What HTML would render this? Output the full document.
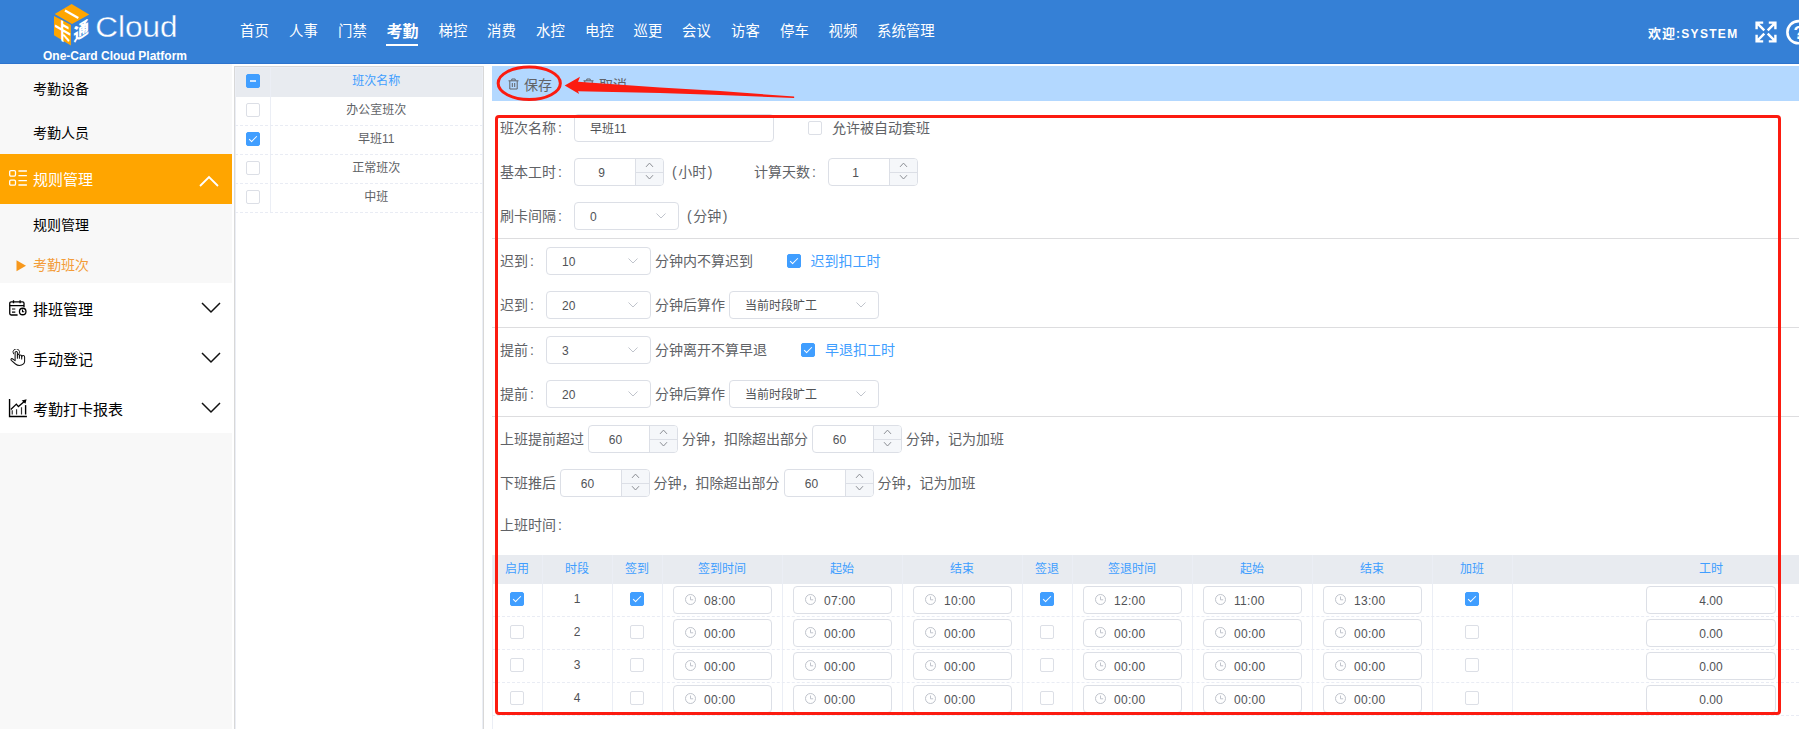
<!DOCTYPE html><html lang="zh-CN"><head><meta charset="utf-8"><title>考勤班次</title><style>
*{box-sizing:border-box;margin:0;padding:0}
html,body{width:1799px;height:729px;overflow:hidden;background:#fff}
body{position:relative;font-family:"Liberation Sans","Noto Sans CJK SC",sans-serif;font-size:14px;color:#606266}
.a{position:absolute;white-space:nowrap}
.t{position:absolute;white-space:nowrap;height:20px;line-height:20px}
.hdr{left:0;top:0;width:1799px;height:64px;background:#3580d6}
.nav{color:#fff;font-size:14.4px;top:21px}
.side{left:0;top:64px;width:232px;height:665px;background:#f8f8f8}
.sm{color:#000;font-size:14px;left:33px}
.sm2{color:#000;font-size:15px;left:33px}
.inp{position:absolute;height:28px;border:1px solid #dcdfe6;border-radius:4px;background:#fff}
.it{position:absolute;white-space:nowrap;font-size:12px;height:26px;line-height:26px;top:1px;color:#505256}
.tm{letter-spacing:0.300px}
.lb{position:absolute;white-space:nowrap;font-size:14px;height:28px;line-height:28px;color:#606266}
.cb{position:absolute;width:14px;height:14px;border:1px solid #dcdfe6;border-radius:2px;background:#fff}
.cb.on{background:#409eff;border-color:#409eff}
.cb.on:after{content:"";position:absolute;left:4px;top:1px;width:3px;height:7px;border:1px solid #fff;border-left:0;border-top:0;transform:rotate(45deg)}
.sep{position:absolute;left:492px;width:1307px;height:1px;background:#dddddf}
.spin{position:absolute;right:0;top:0;width:28px;height:26px;background:#f5f7fa;border-left:1px solid #dcdfe6;border-radius:0 3px 3px 0}
.spin:before{content:"";position:absolute;left:0;top:12.5px;width:27px;height:1px;background:#dcdfe6}
.th{position:absolute;top:555px;height:29px;line-height:29px;font-size:12px;color:#409eff;text-align:center;white-space:nowrap}
.td{position:absolute;height:33px;line-height:32px;font-size:12px;color:#505256;text-align:center}
.vl{position:absolute;width:1px;background:#ebeef5}
.c{margin-left:2px}
.hl{position:absolute;height:0;border-top:1px dashed #e9ecf4}
</style></head><body>
<div class="a hdr"></div><div class="a" style="left:0;top:63px;width:1799px;height:1px;background:#2d74ce"></div>
<svg class="a" style="left:50px;top:0" width="140" height="64" viewBox="50 0 140 64">
<polygon points="71.600,4 89.200,14.400 72,24.100 54.700,14.100" fill="#ffa500"/>
<polygon points="54,16.100 70.900,24.800 70.900,45.400 54,35.300" fill="#ffa500"/>
<line x1="65" y1="10.600" x2="78.300" y2="18" stroke="#fff" stroke-width="2.300"/>
<g transform="matrix(1,0.585,0,1.350,54.500,0)"><text x="0" y="25.900" font-family="'Noto Sans CJK SC',sans-serif" font-weight="700" font-size="16.500" fill="#fff">卡</text></g>
<g transform="matrix(0.940,-0.585,0,1.080,73.400,0)"><text x="0" y="39" font-family="'Noto Sans CJK SC',sans-serif" font-weight="900" font-size="16.500" fill="#fff">通</text></g>
<text x="95.300" y="36.900" font-family="'Liberation Sans',sans-serif" font-size="29.500" fill="#fff" stroke="#3580d6" stroke-width="0.350" textLength="82.300" lengthAdjust="spacingAndGlyphs">Cloud</text>
</svg>
<div class="a" style="left:43px;top:49px;width:144px;height:14px;line-height:14px;font-size:12px;font-weight:700;color:#fff;text-align:center">One-Card Cloud Platform</div>
<div class="t nav" style="left:240px">首页</div>
<div class="t nav" style="left:289px">人事</div>
<div class="t nav" style="left:338px">门禁</div>
<div class="t" style="left:386.500px;top:21px;color:#fff;font-size:16px;font-weight:700;height:22px;line-height:22px">考勤</div>
<div class="a" style="left:386px;top:44px;width:32px;height:2px;background:#fff"></div>
<div class="t nav" style="left:438.5px">梯控</div>
<div class="t nav" style="left:487px">消费</div>
<div class="t nav" style="left:536px">水控</div>
<div class="t nav" style="left:585px">电控</div>
<div class="t nav" style="left:633.5px">巡更</div>
<div class="t nav" style="left:682px">会议</div>
<div class="t nav" style="left:731px">访客</div>
<div class="t nav" style="left:780px">停车</div>
<div class="t nav" style="left:828.5px">视频</div>
<div class="t nav" style="left:877px">系统管理</div>
<div class="t" style="left:1648px;top:24px;color:#fff;font-size:12px;font-weight:700;letter-spacing:1.300px"><span style="font-size:13px;letter-spacing:1px">欢迎</span>:SYSTEM</div>
<svg class="a" style="left:1754px;top:20px" width="24" height="24" viewBox="0 0 24 24" fill="none" stroke="#fff" stroke-width="2.400" stroke-linecap="butt">
<path d="M2.600 9.200V2.600H9.200M2.600 2.600L10.300 10.300"/><path d="M14.800 2.600H21.400V9.200M21.400 2.600L13.700 10.300"/><path d="M2.600 14.800V21.400H9.200M2.600 21.400L10.300 13.700"/><path d="M14.800 21.400H21.400V14.800M21.400 21.400L13.700 13.700"/></svg>
<svg class="a" style="left:1784px;top:18px" width="15" height="28" viewBox="0 0 15 28" fill="none" stroke="#fff" stroke-width="2.600"><circle cx="14.500" cy="14.200" r="11.100"/></svg>
<div class="t" style="left:1793.500px;top:23px;color:#fff;font-size:18px;font-weight:700">?</div>
<div class="a side"></div>
<div class="t sm" style="top:79px">考勤设备</div>
<div class="t sm" style="top:123px">考勤人员</div>
<div class="a" style="left:0;top:154px;width:232px;height:50px;background:#ffa500"></div>
<svg class="a" style="left:8px;top:169px" width="20" height="18" viewBox="0 0 20 18" fill="none" stroke="#fff" stroke-width="1.3">
<rect x="1.700" y="1.550" width="5.800" height="5.500" rx="1.200"/><rect x="1.700" y="11.200" width="5.800" height="5" rx="1.200"/>
<path d="M10.400 2H18.900M10.400 6.600H18.900M10.400 11.600H18.900M10.400 16H18.900"/></svg>
<div class="t" style="left:33px;top:170px;color:#fff;font-size:15px">规则管理</div>
<svg class="a" style="left:198px;top:173.700px" width="22" height="14" viewBox="0 0 22 14" fill="none" stroke="#fff" stroke-width="1.8"><path d="M2 12L11 3L20 12"/></svg>
<div class="t sm" style="top:215px">规则管理</div>
<svg class="a" style="left:16px;top:259.500px" width="11" height="12" viewBox="0 0 11 12"><polygon points="0.5,0.3 10,5.8 0.5,11.3" fill="#f7981d"/></svg>
<div class="t" style="left:33px;top:255px;color:#f39c38;font-size:14px">考勤班次</div>
<div class="a" style="left:0;top:283px;width:232px;height:150px;background:#fff"></div>
<svg class="a" style="left:8px;top:299px" width="20" height="18" viewBox="0 0 20 18" fill="none" stroke="#000" stroke-width="1.300">
<path d="M9.600 16H3.200A1.450 1.450 0 0 1 1.750 14.550V4.300A1.450 1.450 0 0 1 3.200 2.850H14.550A1.450 1.450 0 0 1 16 4.300V8.300"/><path d="M1.750 6.700H16M5.500 1.200V4.300M12.100 1.200V4.300"/><path d="M4 10H7.300M4 13.100H7.300" stroke-width="1.100"/>
<circle cx="14.700" cy="12.500" r="3.250"/><path d="M14.500 10.600V12.800H16.300" stroke-width="1.100"/></svg>
<svg class="a" style="left:9px;top:349px" width="18" height="18" viewBox="0 0 18 18" fill="none" stroke="#111" stroke-width="1.050" stroke-linejoin="round" stroke-linecap="round">
<path d="M6.100 11V3.600A1.150 1.150 0 0 1 8.400 3.600V9.300"/><path d="M8.400 6.300A1 1 0 0 1 10.400 6.300V9.300"/><path d="M10.400 7.100A1.150 1.150 0 0 1 12.700 7.200V9.900"/>
<path d="M12.700 7.900A1.450 1.450 0 0 1 15.600 8.200V12.500C15.600 14.500 13.500 16.400 10.500 16.400C8.500 16.400 7.500 15.800 6.500 15L2.300 11.400C1.400 10.500 2.300 9.200 3.400 9.800L6.100 11.600"/>
<path d="M4.500 4.900A3.300 3.300 0 1 1 10.100 4.900" stroke-width="0.900"/></svg>
<svg class="a" style="left:8px;top:398px" width="20" height="20" viewBox="0 0 20 20" fill="none" stroke="#000" stroke-width="1.400">
<path d="M1.560 1.100V18.460H18.900"/><path d="M4.230 12.300V16.500M8.550 11.250V16.500M13.500 9.200V16.500" stroke="#333" stroke-width="1.200"/><path d="M17.600 7.100V16.500"/>
<path d="M2.800 11.460L8.350 6.100L10.400 8.600L16.300 3.400" stroke-width="1.300"/><polygon points="13.700,2.400 18.600,1.170 17.400,5.700" fill="#000" stroke="none"/></svg>
<div class="t sm2" style="top:300px">排班管理</div>
<div class="t sm2" style="top:350px">手动登记</div>
<div class="t sm2" style="top:400px">考勤打卡报表</div>
<svg class="a" style="left:200px;top:301px" width="22" height="14" viewBox="0 0 22 14" fill="none" stroke="#111" stroke-width="1.500"><path d="M2 2L11 11L20 2"/></svg>
<svg class="a" style="left:200px;top:351px" width="22" height="14" viewBox="0 0 22 14" fill="none" stroke="#111" stroke-width="1.500"><path d="M2 2L11 11L20 2"/></svg>
<svg class="a" style="left:200px;top:401px" width="22" height="14" viewBox="0 0 22 14" fill="none" stroke="#111" stroke-width="1.500"><path d="M2 2L11 11L20 2"/></svg>
<div class="a" style="left:234px;top:66px;width:250px;height:670px;border:1px solid #d8d8d8;background:#fff;box-shadow:inset 0 0 0 1px #ebeef5"></div>
<div class="a" style="left:236px;top:68px;width:246px;height:29px;background:#e8ebf0"></div>
<div class="vl" style="left:270px;top:67px;height:146px"></div>
<div class="a" style="left:270.300px;top:71px;width:212px;height:20px;line-height:20px;font-size:12px;color:#409eff;text-align:center">班次名称</div>
<div class="a" style="left:270.300px;top:100px;width:212px;height:20px;line-height:20px;font-size:12px;color:#606266;text-align:center">办公室班次</div>
<div class="hl" style="left:235px;top:125px;width:248px"></div>
<div class="cb" style="left:246px;top:103px"></div>
<div class="a" style="left:270.300px;top:129px;width:212px;height:20px;line-height:20px;font-size:12px;color:#606266;text-align:center">早班11</div>
<div class="hl" style="left:235px;top:154px;width:248px"></div>
<div class="cb on" style="left:246px;top:132px"></div>
<div class="a" style="left:270.300px;top:158px;width:212px;height:20px;line-height:20px;font-size:12px;color:#606266;text-align:center">正常班次</div>
<div class="hl" style="left:235px;top:183px;width:248px"></div>
<div class="cb" style="left:246px;top:161px"></div>
<div class="a" style="left:270.300px;top:187px;width:212px;height:20px;line-height:20px;font-size:12px;color:#606266;text-align:center">中班</div>
<div class="hl" style="left:235px;top:212px;width:248px"></div>
<div class="cb" style="left:246px;top:190px"></div>
<div class="cb" style="left:246px;top:74px;background:#409eff;border-color:#409eff"></div><div class="a" style="left:250px;top:80px;width:6px;height:2px;background:#cfe6ff"></div>
<div class="a" style="left:492px;top:66px;width:1307px;height:35px;background:#b3d8ff"></div>
<svg class="a" style="left:507.5px;top:78px" width="11" height="12" viewBox="0 0 11 12" fill="none" stroke="#606266" stroke-width="1"><path d="M0.500 2.800H10.500M3.800 2.500V1H7.200V2.500M1.800 3V11H9.200V3M4.300 5V9M6.700 5V9"/></svg>
<div class="t" style="left:524px;top:75px;font-size:14px;color:#606266">保存</div>
<svg class="a" style="left:582.5px;top:78px" width="11" height="12" viewBox="0 0 11 12" fill="none" stroke="#606266" stroke-width="1"><path d="M0.500 2.800H10.500M3.800 2.500V1H7.200V2.500M1.800 3V11H9.200V3M4.300 5V9M6.700 5V9"/></svg>
<div class="t" style="left:599px;top:75px;font-size:14px;color:#606266;height:15px;overflow:hidden">取消</div>
<div class="lb" style="left:500px;top:114px">班次名称<span class=c>:</span></div>
<div class="inp" style="left:574px;top:114px;width:200px"><div class="it" style="left:15px">早班11</div></div>
<div class="cb" style="left:808px;top:121px"></div>
<div class="lb" style="left:832px;top:114px">允许被自动套班</div>
<div class="lb" style="left:500px;top:158px">基本工时<span class=c>:</span></div>
<div class="inp" style="left:574px;top:158px;width:90px"><div class="it" style="left:0;width:53px;text-align:center">9</div><div class="spin"><svg class="a" style="left:8px;top:3px" width="11" height="20" viewBox="0 0 11 20" fill="none" stroke="#8a8d93" stroke-width="1"><path d="M2 4.900L5.500 1.100L9 4.900M2 13.200L5.500 17L9 13.200"/></svg></div></div>
<div class="lb" style="left:672px;top:158px">(<span style="margin:0 1.500px">小时</span>)</div>
<div class="lb" style="left:754px;top:158px">计算天数<span class=c>:</span></div>
<div class="inp" style="left:828px;top:158px;width:90px"><div class="it" style="left:0;width:53px;text-align:center">1</div><div class="spin"><svg class="a" style="left:8px;top:3px" width="11" height="20" viewBox="0 0 11 20" fill="none" stroke="#8a8d93" stroke-width="1"><path d="M2 4.900L5.500 1.100L9 4.900M2 13.200L5.500 17L9 13.200"/></svg></div></div>
<div class="lb" style="left:500px;top:202px">刷卡间隔<span class=c>:</span></div>
<div class="inp" style="left:574px;top:202px;width:105px"><div class="it" style="left:15px">0</div><svg class="a" style="right:11px;top:9px" width="12" height="8" viewBox="0 0 12 8" fill="none" stroke="#c0c4cc" stroke-width="1"><path d="M1.500 1.500L6 6L10.500 1.500"/></svg></div>
<div class="lb" style="left:687px;top:202px">(<span style="margin:0 1.500px">分钟</span>)</div>
<div class="sep" style="top:238px"></div>
<div class="lb" style="left:500px;top:247px">迟到<span class=c>:</span></div>
<div class="inp" style="left:546px;top:247px;width:105px"><div class="it" style="left:15px">10</div><svg class="a" style="right:11px;top:9px" width="12" height="8" viewBox="0 0 12 8" fill="none" stroke="#c0c4cc" stroke-width="1"><path d="M1.500 1.500L6 6L10.500 1.500"/></svg></div>
<div class="lb" style="left:655px;top:247px">分钟内不算迟到</div>
<div class="cb on" style="left:787px;top:254px"></div>
<div class="lb" style="left:810.5px;top:247px;color:#409eff">迟到扣工时</div>
<div class="lb" style="left:500px;top:291px">迟到<span class=c>:</span></div>
<div class="inp" style="left:546px;top:291px;width:105px"><div class="it" style="left:15px">20</div><svg class="a" style="right:11px;top:9px" width="12" height="8" viewBox="0 0 12 8" fill="none" stroke="#c0c4cc" stroke-width="1"><path d="M1.500 1.500L6 6L10.500 1.500"/></svg></div>
<div class="lb" style="left:655px;top:291px">分钟后算作</div>
<div class="inp" style="left:729px;top:291px;width:150px"><div class="it" style="left:15px">当前时段旷工</div><svg class="a" style="right:11px;top:9px" width="12" height="8" viewBox="0 0 12 8" fill="none" stroke="#c0c4cc" stroke-width="1"><path d="M1.500 1.500L6 6L10.500 1.500"/></svg></div>
<div class="sep" style="top:327px"></div>
<div class="lb" style="left:500px;top:336px">提前<span class=c>:</span></div>
<div class="inp" style="left:546px;top:336px;width:105px"><div class="it" style="left:15px">3</div><svg class="a" style="right:11px;top:9px" width="12" height="8" viewBox="0 0 12 8" fill="none" stroke="#c0c4cc" stroke-width="1"><path d="M1.500 1.500L6 6L10.500 1.500"/></svg></div>
<div class="lb" style="left:655px;top:336px">分钟离开不算早退</div>
<div class="cb on" style="left:801px;top:343px"></div>
<div class="lb" style="left:825px;top:336px;color:#409eff">早退扣工时</div>
<div class="lb" style="left:500px;top:380px">提前<span class=c>:</span></div>
<div class="inp" style="left:546px;top:380px;width:105px"><div class="it" style="left:15px">20</div><svg class="a" style="right:11px;top:9px" width="12" height="8" viewBox="0 0 12 8" fill="none" stroke="#c0c4cc" stroke-width="1"><path d="M1.500 1.500L6 6L10.500 1.500"/></svg></div>
<div class="lb" style="left:655px;top:380px">分钟后算作</div>
<div class="inp" style="left:729px;top:380px;width:150px"><div class="it" style="left:15px">当前时段旷工</div><svg class="a" style="right:11px;top:9px" width="12" height="8" viewBox="0 0 12 8" fill="none" stroke="#c0c4cc" stroke-width="1"><path d="M1.500 1.500L6 6L10.500 1.500"/></svg></div>
<div class="sep" style="top:416px"></div>
<div class="lb" style="left:500px;top:425px">上班提前超过</div>
<div class="inp" style="left:588px;top:425px;width:90px"><div class="it" style="left:0;width:53px;text-align:center">60</div><div class="spin"><svg class="a" style="left:8px;top:3px" width="11" height="20" viewBox="0 0 11 20" fill="none" stroke="#8a8d93" stroke-width="1"><path d="M2 4.900L5.500 1.100L9 4.900M2 13.200L5.500 17L9 13.200"/></svg></div></div>
<div class="lb" style="left:682px;top:425px">分钟，扣除超出部分</div>
<div class="inp" style="left:812px;top:425px;width:90px"><div class="it" style="left:0;width:53px;text-align:center">60</div><div class="spin"><svg class="a" style="left:8px;top:3px" width="11" height="20" viewBox="0 0 11 20" fill="none" stroke="#8a8d93" stroke-width="1"><path d="M2 4.900L5.500 1.100L9 4.900M2 13.200L5.500 17L9 13.200"/></svg></div></div>
<div class="lb" style="left:906px;top:425px">分钟，记为加班</div>
<div class="lb" style="left:500px;top:469px">下班推后</div>
<div class="inp" style="left:560px;top:469px;width:90px"><div class="it" style="left:0;width:53px;text-align:center">60</div><div class="spin"><svg class="a" style="left:8px;top:3px" width="11" height="20" viewBox="0 0 11 20" fill="none" stroke="#8a8d93" stroke-width="1"><path d="M2 4.900L5.500 1.100L9 4.900M2 13.200L5.500 17L9 13.200"/></svg></div></div>
<div class="lb" style="left:653.5px;top:469px">分钟，扣除超出部分</div>
<div class="inp" style="left:784px;top:469px;width:90px"><div class="it" style="left:0;width:53px;text-align:center">60</div><div class="spin"><svg class="a" style="left:8px;top:3px" width="11" height="20" viewBox="0 0 11 20" fill="none" stroke="#8a8d93" stroke-width="1"><path d="M2 4.900L5.500 1.100L9 4.900M2 13.200L5.500 17L9 13.200"/></svg></div></div>
<div class="lb" style="left:877.5px;top:469px">分钟，记为加班</div>
<div class="lb" style="left:500px;top:511px">上班时间<span class=c>:</span></div>
<div class="a" style="left:492px;top:555px;width:1307px;height:28.500px;background:#e8ebf0"></div>
<div class="th" style="left:492px;width:50px">启用</div>
<div class="th" style="left:542px;width:70px">时段</div>
<div class="th" style="left:612px;width:50px">签到</div>
<div class="th" style="left:662px;width:120px">签到时间</div>
<div class="th" style="left:782px;width:120px">起始</div>
<div class="th" style="left:902px;width:120px">结束</div>
<div class="th" style="left:1022px;width:50px">签退</div>
<div class="th" style="left:1072px;width:120px">签退时间</div>
<div class="th" style="left:1192px;width:120px">起始</div>
<div class="th" style="left:1312px;width:120px">结束</div>
<div class="th" style="left:1432px;width:80px">加班</div>
<div class="th" style="left:1646px;width:130px">工时</div>
<div class="vl" style="left:542px;top:555px;height:161px"></div>
<div class="vl" style="left:612px;top:555px;height:161px"></div>
<div class="vl" style="left:662px;top:555px;height:161px"></div>
<div class="vl" style="left:782px;top:555px;height:161px"></div>
<div class="vl" style="left:902px;top:555px;height:161px"></div>
<div class="vl" style="left:1022px;top:555px;height:161px"></div>
<div class="vl" style="left:1072px;top:555px;height:161px"></div>
<div class="vl" style="left:1192px;top:555px;height:161px"></div>
<div class="vl" style="left:1312px;top:555px;height:161px"></div>
<div class="vl" style="left:1432px;top:555px;height:161px"></div>
<div class="vl" style="left:1512px;top:555px;height:161px"></div>
<div class="vl" style="left:492px;top:555px;height:174px"></div>
<div class="hl" style="left:492px;top:616px;width:1307px"></div>
<div class="cb on" style="left:510px;top:592px"></div>
<div class="td" style="left:542px;top:583px;width:70px">1</div>
<div class="cb on" style="left:630px;top:592px"></div>
<div class="inp" style="left:673px;top:586px;width:99px"><svg class="a" style="left:10px;top:6px" width="13" height="13" viewBox="0 0 13 13" fill="none" stroke="#c0c4cc" stroke-width="1"><circle cx="6.500" cy="6.500" r="5"/><path d="M6.500 3.500V6.800H9.200"/></svg><div class="it tm" style="left:30px">08:00</div></div>
<div class="inp" style="left:793px;top:586px;width:99px"><svg class="a" style="left:10px;top:6px" width="13" height="13" viewBox="0 0 13 13" fill="none" stroke="#c0c4cc" stroke-width="1"><circle cx="6.500" cy="6.500" r="5"/><path d="M6.500 3.500V6.800H9.200"/></svg><div class="it tm" style="left:30px">07:00</div></div>
<div class="inp" style="left:913px;top:586px;width:99px"><svg class="a" style="left:10px;top:6px" width="13" height="13" viewBox="0 0 13 13" fill="none" stroke="#c0c4cc" stroke-width="1"><circle cx="6.500" cy="6.500" r="5"/><path d="M6.500 3.500V6.800H9.200"/></svg><div class="it tm" style="left:30px">10:00</div></div>
<div class="cb on" style="left:1040px;top:592px"></div>
<div class="inp" style="left:1083px;top:586px;width:99px"><svg class="a" style="left:10px;top:6px" width="13" height="13" viewBox="0 0 13 13" fill="none" stroke="#c0c4cc" stroke-width="1"><circle cx="6.500" cy="6.500" r="5"/><path d="M6.500 3.500V6.800H9.200"/></svg><div class="it tm" style="left:30px">12:00</div></div>
<div class="inp" style="left:1203px;top:586px;width:99px"><svg class="a" style="left:10px;top:6px" width="13" height="13" viewBox="0 0 13 13" fill="none" stroke="#c0c4cc" stroke-width="1"><circle cx="6.500" cy="6.500" r="5"/><path d="M6.500 3.500V6.800H9.200"/></svg><div class="it tm" style="left:30px">11:00</div></div>
<div class="inp" style="left:1323px;top:586px;width:99px"><svg class="a" style="left:10px;top:6px" width="13" height="13" viewBox="0 0 13 13" fill="none" stroke="#c0c4cc" stroke-width="1"><circle cx="6.500" cy="6.500" r="5"/><path d="M6.500 3.500V6.800H9.200"/></svg><div class="it tm" style="left:30px">13:00</div></div>
<div class="cb on" style="left:1465px;top:592px"></div>
<div class="inp" style="left:1646px;top:586px;width:130px"><div class="it" style="left:0;width:128px;text-align:center">4.00</div></div>
<div class="hl" style="left:492px;top:649px;width:1307px"></div>
<div class="cb" style="left:510px;top:625px"></div>
<div class="td" style="left:542px;top:616px;width:70px">2</div>
<div class="cb" style="left:630px;top:625px"></div>
<div class="inp" style="left:673px;top:619px;width:99px"><svg class="a" style="left:10px;top:6px" width="13" height="13" viewBox="0 0 13 13" fill="none" stroke="#c0c4cc" stroke-width="1"><circle cx="6.500" cy="6.500" r="5"/><path d="M6.500 3.500V6.800H9.200"/></svg><div class="it tm" style="left:30px">00:00</div></div>
<div class="inp" style="left:793px;top:619px;width:99px"><svg class="a" style="left:10px;top:6px" width="13" height="13" viewBox="0 0 13 13" fill="none" stroke="#c0c4cc" stroke-width="1"><circle cx="6.500" cy="6.500" r="5"/><path d="M6.500 3.500V6.800H9.200"/></svg><div class="it tm" style="left:30px">00:00</div></div>
<div class="inp" style="left:913px;top:619px;width:99px"><svg class="a" style="left:10px;top:6px" width="13" height="13" viewBox="0 0 13 13" fill="none" stroke="#c0c4cc" stroke-width="1"><circle cx="6.500" cy="6.500" r="5"/><path d="M6.500 3.500V6.800H9.200"/></svg><div class="it tm" style="left:30px">00:00</div></div>
<div class="cb" style="left:1040px;top:625px"></div>
<div class="inp" style="left:1083px;top:619px;width:99px"><svg class="a" style="left:10px;top:6px" width="13" height="13" viewBox="0 0 13 13" fill="none" stroke="#c0c4cc" stroke-width="1"><circle cx="6.500" cy="6.500" r="5"/><path d="M6.500 3.500V6.800H9.200"/></svg><div class="it tm" style="left:30px">00:00</div></div>
<div class="inp" style="left:1203px;top:619px;width:99px"><svg class="a" style="left:10px;top:6px" width="13" height="13" viewBox="0 0 13 13" fill="none" stroke="#c0c4cc" stroke-width="1"><circle cx="6.500" cy="6.500" r="5"/><path d="M6.500 3.500V6.800H9.200"/></svg><div class="it tm" style="left:30px">00:00</div></div>
<div class="inp" style="left:1323px;top:619px;width:99px"><svg class="a" style="left:10px;top:6px" width="13" height="13" viewBox="0 0 13 13" fill="none" stroke="#c0c4cc" stroke-width="1"><circle cx="6.500" cy="6.500" r="5"/><path d="M6.500 3.500V6.800H9.200"/></svg><div class="it tm" style="left:30px">00:00</div></div>
<div class="cb" style="left:1465px;top:625px"></div>
<div class="inp" style="left:1646px;top:619px;width:130px"><div class="it" style="left:0;width:128px;text-align:center">0.00</div></div>
<div class="hl" style="left:492px;top:682px;width:1307px"></div>
<div class="cb" style="left:510px;top:658px"></div>
<div class="td" style="left:542px;top:649px;width:70px">3</div>
<div class="cb" style="left:630px;top:658px"></div>
<div class="inp" style="left:673px;top:652px;width:99px"><svg class="a" style="left:10px;top:6px" width="13" height="13" viewBox="0 0 13 13" fill="none" stroke="#c0c4cc" stroke-width="1"><circle cx="6.500" cy="6.500" r="5"/><path d="M6.500 3.500V6.800H9.200"/></svg><div class="it tm" style="left:30px">00:00</div></div>
<div class="inp" style="left:793px;top:652px;width:99px"><svg class="a" style="left:10px;top:6px" width="13" height="13" viewBox="0 0 13 13" fill="none" stroke="#c0c4cc" stroke-width="1"><circle cx="6.500" cy="6.500" r="5"/><path d="M6.500 3.500V6.800H9.200"/></svg><div class="it tm" style="left:30px">00:00</div></div>
<div class="inp" style="left:913px;top:652px;width:99px"><svg class="a" style="left:10px;top:6px" width="13" height="13" viewBox="0 0 13 13" fill="none" stroke="#c0c4cc" stroke-width="1"><circle cx="6.500" cy="6.500" r="5"/><path d="M6.500 3.500V6.800H9.200"/></svg><div class="it tm" style="left:30px">00:00</div></div>
<div class="cb" style="left:1040px;top:658px"></div>
<div class="inp" style="left:1083px;top:652px;width:99px"><svg class="a" style="left:10px;top:6px" width="13" height="13" viewBox="0 0 13 13" fill="none" stroke="#c0c4cc" stroke-width="1"><circle cx="6.500" cy="6.500" r="5"/><path d="M6.500 3.500V6.800H9.200"/></svg><div class="it tm" style="left:30px">00:00</div></div>
<div class="inp" style="left:1203px;top:652px;width:99px"><svg class="a" style="left:10px;top:6px" width="13" height="13" viewBox="0 0 13 13" fill="none" stroke="#c0c4cc" stroke-width="1"><circle cx="6.500" cy="6.500" r="5"/><path d="M6.500 3.500V6.800H9.200"/></svg><div class="it tm" style="left:30px">00:00</div></div>
<div class="inp" style="left:1323px;top:652px;width:99px"><svg class="a" style="left:10px;top:6px" width="13" height="13" viewBox="0 0 13 13" fill="none" stroke="#c0c4cc" stroke-width="1"><circle cx="6.500" cy="6.500" r="5"/><path d="M6.500 3.500V6.800H9.200"/></svg><div class="it tm" style="left:30px">00:00</div></div>
<div class="cb" style="left:1465px;top:658px"></div>
<div class="inp" style="left:1646px;top:652px;width:130px"><div class="it" style="left:0;width:128px;text-align:center">0.00</div></div>
<div class="hl" style="left:492px;top:715px;width:1307px"></div>
<div class="cb" style="left:510px;top:691px"></div>
<div class="td" style="left:542px;top:682px;width:70px">4</div>
<div class="cb" style="left:630px;top:691px"></div>
<div class="inp" style="left:673px;top:685px;width:99px"><svg class="a" style="left:10px;top:6px" width="13" height="13" viewBox="0 0 13 13" fill="none" stroke="#c0c4cc" stroke-width="1"><circle cx="6.500" cy="6.500" r="5"/><path d="M6.500 3.500V6.800H9.200"/></svg><div class="it tm" style="left:30px">00:00</div></div>
<div class="inp" style="left:793px;top:685px;width:99px"><svg class="a" style="left:10px;top:6px" width="13" height="13" viewBox="0 0 13 13" fill="none" stroke="#c0c4cc" stroke-width="1"><circle cx="6.500" cy="6.500" r="5"/><path d="M6.500 3.500V6.800H9.200"/></svg><div class="it tm" style="left:30px">00:00</div></div>
<div class="inp" style="left:913px;top:685px;width:99px"><svg class="a" style="left:10px;top:6px" width="13" height="13" viewBox="0 0 13 13" fill="none" stroke="#c0c4cc" stroke-width="1"><circle cx="6.500" cy="6.500" r="5"/><path d="M6.500 3.500V6.800H9.200"/></svg><div class="it tm" style="left:30px">00:00</div></div>
<div class="cb" style="left:1040px;top:691px"></div>
<div class="inp" style="left:1083px;top:685px;width:99px"><svg class="a" style="left:10px;top:6px" width="13" height="13" viewBox="0 0 13 13" fill="none" stroke="#c0c4cc" stroke-width="1"><circle cx="6.500" cy="6.500" r="5"/><path d="M6.500 3.500V6.800H9.200"/></svg><div class="it tm" style="left:30px">00:00</div></div>
<div class="inp" style="left:1203px;top:685px;width:99px"><svg class="a" style="left:10px;top:6px" width="13" height="13" viewBox="0 0 13 13" fill="none" stroke="#c0c4cc" stroke-width="1"><circle cx="6.500" cy="6.500" r="5"/><path d="M6.500 3.500V6.800H9.200"/></svg><div class="it tm" style="left:30px">00:00</div></div>
<div class="inp" style="left:1323px;top:685px;width:99px"><svg class="a" style="left:10px;top:6px" width="13" height="13" viewBox="0 0 13 13" fill="none" stroke="#c0c4cc" stroke-width="1"><circle cx="6.500" cy="6.500" r="5"/><path d="M6.500 3.500V6.800H9.200"/></svg><div class="it tm" style="left:30px">00:00</div></div>
<div class="cb" style="left:1465px;top:691px"></div>
<div class="inp" style="left:1646px;top:685px;width:130px"><div class="it" style="left:0;width:128px;text-align:center">0.00</div></div>
<svg class="a" style="left:0;top:0;pointer-events:none" width="1799" height="729" viewBox="0 0 1799 729">
<rect x="496.500" y="116.500" width="1283" height="597" rx="2.500" fill="none" stroke="#fc1b10" stroke-width="3"/>
<ellipse cx="529.250" cy="83.250" rx="31.100" ry="16.250" fill="none" stroke="#fc1b10" stroke-width="3"/>
<polygon points="564.700,85.500 580,76.800 578,81.800 660,87.400 720,91.100 794,96.600 794.300,97.300 794,98 720,94.900 660,93 578,91.200 579.200,94.100" fill="#fc1b10"/>
</svg>
</body></html>
